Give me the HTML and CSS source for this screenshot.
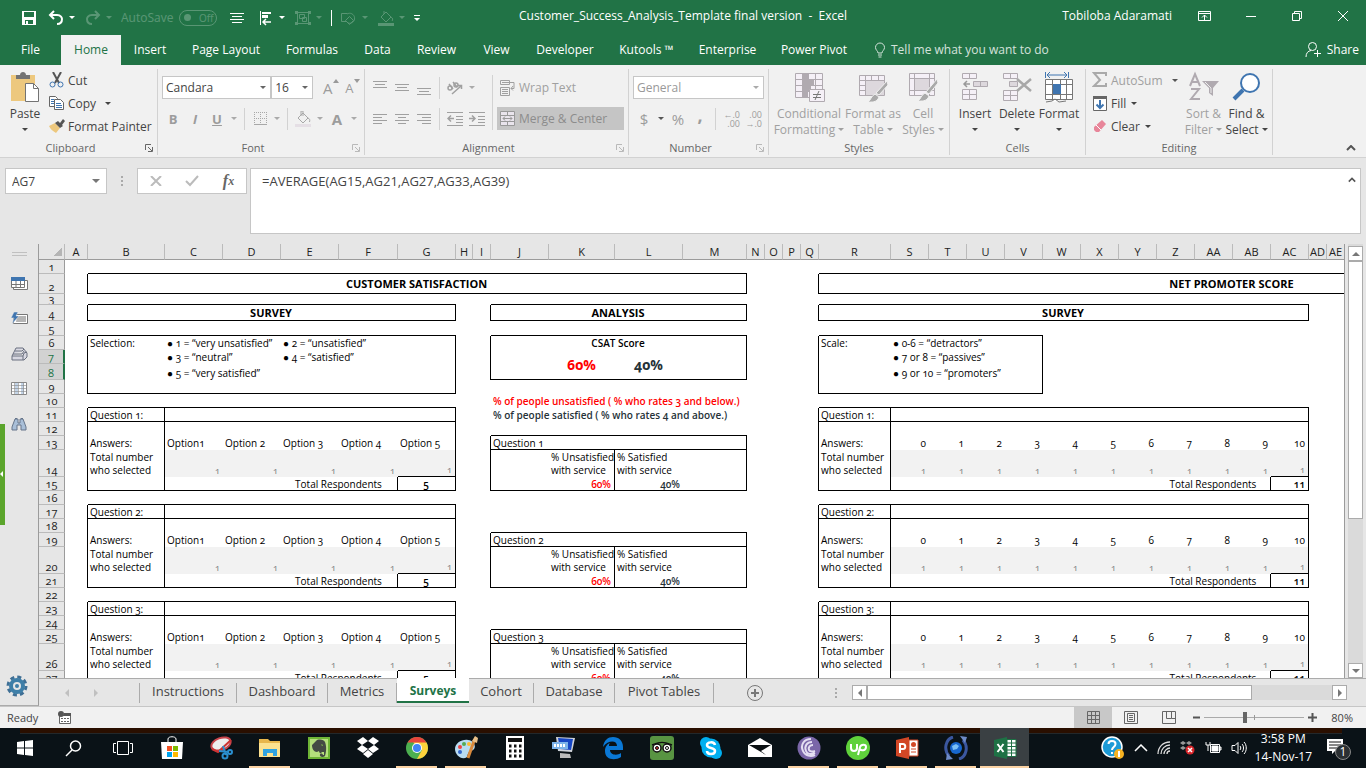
FILE: index.html
```html
<!DOCTYPE html>
<html lang="en">
<head>
    <meta charset="UTF-8">
    <meta name="viewport" content="width=device-width, initial-scale=1.0">
    <title>Customer_Success_Analysis_Template final version - Excel</title>
    <link rel="stylesheet" href="styles.css">
</head>
<body>
    <header class="titlebar">
        <div class="qat">
            <button class="qat-btn" aria-label="Save"><svg width="16" height="16" viewBox="0 0 16 16"><path d="M1 1h14v14H1z" fill="#fff"/><path d="M3 2h10v5H3zM4 10h8v4H4z" fill="#217346"/><path d="M5 11h2v4H5z" fill="#fff"/></svg></button>
            <div class="split"><button aria-label="Undo"><svg width="18" height="16" viewBox="0 0 18 16" fill="none" stroke="#fff" stroke-width="2"><path d="M7 1L3 5l4 4M3 5h7c4 0 5 3 5 4 0 3-2 5-5 5"/></svg></button><i class="caret"></i></div>
            <div class="split dim"><button aria-label="Redo"><svg width="18" height="16" viewBox="0 0 18 16" fill="none" stroke="#fff" stroke-width="2"><path d="M11 1l4 4-4 4M15 5H8C4 5 3 8 3 9c0 3 2 5 5 5"/></svg></button><i class="caret"></i></div>
            <label class="autosave dim">AutoSave <span class="toggle"><input type="checkbox" disabled>Off</span></label>
            <button class="qat-btn wide" aria-label="Center"><svg width="14" height="14" viewBox="0 0 14 14" stroke="#fff"><path d="M0 2.500h14M2 5.500h10M0 8.500h14M2 11.500h10"/></svg></button>
            <div class="split"><button aria-label="Align"><svg width="18" height="16" viewBox="0 0 18 16"><path d="M3.500 1v14" stroke="#fff"/><path d="M5 2h9v2H5zM5 5h6v3H5z" fill="#fff"/><path d="M14 12H6m3-3l-3 3 3 3" fill="none" stroke="#fff" stroke-width="1.500"/></svg></button><i class="caret"></i></div>
            <div class="split dim"><button aria-label="Group"><svg width="18" height="16" viewBox="0 0 18 16" fill="none" stroke="#fff"><path d="M3.500 2.500h11v11h-11zM5.500 4.500h5v4h-5zM8.500 7.500h4v4h-4z"/><path d="M1 1h3v3H1zM14 1h3v3h-3zM1 12h3v3H1zM14 12h3v3h-3z" fill="#fff" stroke="none"/></svg></button><i class="caret"></i></div>
            <span class="qat-sep"></span>
            <div class="split dim"><button aria-label="Shapes"><svg width="18" height="16" viewBox="0 0 18 16" fill="none" stroke="#fff"><path d="M6 11.500H1.500v-8H7M8 13a5 5 0 1 0-1-9M9.500 6.500l4 4-4 4-4-4z"/></svg></button><i class="caret"></i></div>
            <div class="split dim"><button aria-label="Shape fill"><svg width="18" height="16" viewBox="0 0 18 16" fill="none" stroke="#fff"><path d="M4 7l5-5 5 5-5 5zM7 4V1M14 7c2 1 2 3 1 4"/><path d="M1 13h16v3H1z" fill="#fff" stroke="none"/></svg></button><i class="caret"></i></div>
            <button class="customise" aria-label="Customize toolbar"><i class="caret"></i></button>
        </div>
        <div class="doc-title">Customer_Success_Analysis_Template final version &nbsp;-&nbsp; Excel</div>
        <div class="window-tools">
            <span class="user">Tobiloba Adaramati</span>
            <button aria-label="Ribbon options"><svg width="14" height="12" viewBox="0 0 14 12" fill="none" stroke="#fff"><path d="M.5 1.500h12v9H.5zM.5 3.500h12M6.500 10V5M4 7.500L6.500 5 9 7.500"/></svg></button>
            <button aria-label="Minimize"><svg width="12" height="12" viewBox="0 0 12 12" stroke="#fff"><path d="M1 6.500h10"/></svg></button>
            <button aria-label="Restore"><svg width="12" height="12" viewBox="0 0 12 12" fill="none" stroke="#fff"><path d="M1.500 3.500h7v7h-7zM3.500 3V1.500h7v7H9"/></svg></button>
            <button aria-label="Close"><svg width="12" height="12" viewBox="0 0 12 12" stroke="#fff"><path d="M1 1l10 10M11 1L1 11"/></svg></button>
        </div>
    </header>

    <nav class="tabs">
        <a href="#">File</a>
        <a href="#" class="active">Home</a>
        <a href="#">Insert</a>
        <a href="#">Page Layout</a>
        <a href="#">Formulas</a>
        <a href="#">Data</a>
        <a href="#">Review</a>
        <a href="#">View</a>
        <a href="#">Developer</a>
        <a href="#">Kutools ™</a>
        <a href="#">Enterprise</a>
        <a href="#">Power Pivot</a>
        <a href="#" class="tell-me"><svg width="12" height="16" viewBox="0 0 12 16" fill="none" stroke="#fff"><path d="M4 11c0-2-2.500-3-2.500-5.500a4.500 4.500 0 0 1 9 0C10.500 8 8 9 8 11zM4 13h4M4.500 15h3"/></svg>Tell me what you want to do</a>
        <a href="#" class="share"><svg width="16" height="17" viewBox="0 0 16 17" fill="none" stroke="#fff"><circle cx="7.500" cy="5.500" r="4"/><path d="M1 16c0-4 2-6 5-6.500M12.500 9v7M9 12.500h7"/></svg>Share</a>
    </nav>

    <section class="ribbon">
        <div class="group clipboard">
            <div class="group-body">
                <button class="big"><svg width="30" height="32" viewBox="0 0 30 32"><path d="M1 4h24v26H1z" fill="#edc87e"/><path d="M6 4h4c0-4 6-4 6 0h4v4H6z" fill="#737373"/><path d="M15.500 12.500h8l5 5v13h-13z" fill="#fff" stroke="#737373"/><path d="M23.500 12.500v5h5" fill="none" stroke="#737373"/></svg>Paste<i class="caret"></i></button>
                <div class="stack">
                    <button class="small"><svg width="16" height="16" viewBox="0 0 16 16" fill="none"><path d="M4 0l6 11M12 0L6 11" stroke="#555" stroke-width="2"/><circle cx="3.500" cy="12.500" r="2.500" stroke="#3f75b0"/><circle cx="11.500" cy="12.500" r="2.500" stroke="#3f75b0"/></svg>Cut</button>
                    <button class="small"><svg width="16" height="16" viewBox="0 0 16 16" fill="#fff" stroke="#666"><path d="M.5 1.500h6l2 2v8h-8z"/><path d="M5.500 4.500h6l3 3v7h-9z"/><path d="M2 4.500h3M2 6.500h3M2 8.500h3M7 8.500h5M7 10.500h6M7 12.500h6" stroke="#3f75b0"/></svg>Copy<i class="caret far"></i></button>
                    <button class="small"><svg width="16" height="16" viewBox="0 0 16 16"><path d="M0 8l6-3 5 5-4 5C4 13 1 11 0 8z" fill="#edc87e"/><path d="M6 5l3-2 2 2 3-4 2 2-3 4 1 1-3 2z" fill="#555"/></svg>Format Painter</button>
                </div>
            </div>
            <div class="group-label"><span>Clipboard</span><svg width="8" height="8" viewBox="0 0 8 8"><use href="#launcher"/></svg></div>
        </div>

        <div class="group font">
            <div class="group-body rows">
                <div class="row">
                    <span class="combo font-name"><select aria-label="Font"><option>Candara</option></select></span>
                    <span class="combo font-size"><select aria-label="Font size"><option>16</option></select></span>
                    <button class="tool gap-left">A<svg class="sup" width="6" height="4" viewBox="0 0 6 4"><path d="M0 4l3-4 3 4z" fill="#999"/></svg></button>
                    <button class="tool smaller">A<svg class="sup" width="6" height="4" viewBox="0 0 6 4"><path d="M0 0h6L3 4z" fill="#999"/></svg></button>
                </div>
                <div class="row">
                    <button class="tool"><b>B</b></button><button class="tool"><b><em>I</em></b></button><button class="tool"><b><u>U</u></b></button><i class="caret"></i>
                    <span class="sep"></span>
                    <button class="tool" aria-label="Borders"><svg width="13" height="13" viewBox="0 0 13 13" stroke="#a8a8a8"><path d="M0 .5h13M0 6.500h13M.5 0v12M6.500 0v12M12.500 0v12" stroke-dasharray="1 1"/><path d="M0 12.500h13"/></svg></button><i class="caret"></i>
                    <span class="sep"></span>
                    <button class="tool" aria-label="Fill color"><svg width="16" height="16" viewBox="0 0 16 16" fill="none" stroke="#a8a8a8"><path d="M3 7l5-5 5 5-5 5zM6 5V0h2v5M13 7c2 1 2 2 1.500 4"/><path d="M0 13h16v3H0z" fill="#e5dfe5" stroke="none"/></svg></button><i class="caret"></i>
                    <button class="tool gray-a"><b>A</b></button><i class="caret"></i>
                </div>
            </div>
            <div class="group-label"><span>Font</span><svg class="faint" width="8" height="8" viewBox="0 0 8 8"><use href="#launcher"/></svg></div>
        </div>

        <div class="group alignment">
            <div class="group-body">
                <div class="rows align-tools">
                    <div class="row">
                        <button class="tool" aria-label="Top align"><svg width="14" height="16" viewBox="0 0 14 16" stroke="#a0a0a0"><path d="M0 1.500h14M2 4.500h10M0 7.500h14"/></svg></button>
                        <button class="tool" aria-label="Middle align"><svg width="14" height="16" viewBox="0 0 14 16" stroke="#a0a0a0"><path d="M0 4.500h14M2 7.500h10M0 10.500h14"/></svg></button>
                        <button class="tool" aria-label="Bottom align"><svg width="14" height="16" viewBox="0 0 14 16" stroke="#a0a0a0"><path d="M0 8.500h14M2 11.500h10M0 14.500h14"/></svg></button>
                        <span class="sep"></span>
                        <button class="tool" aria-label="Orientation"><svg width="18" height="16" viewBox="0 0 18 16" fill="none" stroke="#a0a0a0" stroke-width="1.500"><circle cx="4" cy="8" r="2"/><path d="M3 4l4 5M7 2l4 5"/><circle cx="10" cy="5" r="2"/><path d="M6 14l9-8M12 5.500h3.500V9"/></svg></button><i class="caret"></i>
                    </div>
                    <div class="row">
                        <button class="tool" aria-label="Align left"><svg width="14" height="12" viewBox="0 0 14 12" stroke="#a0a0a0"><path d="M0 1.500h14M0 4.500h9M0 7.500h14M0 10.500h9"/></svg></button>
                        <button class="tool" aria-label="Center"><svg width="14" height="12" viewBox="0 0 14 12" stroke="#a0a0a0"><path d="M0 1.500h14M3 4.500h8M0 7.500h14M3 10.500h8"/></svg></button>
                        <button class="tool" aria-label="Align right"><svg width="14" height="12" viewBox="0 0 14 12" stroke="#a0a0a0"><path d="M0 1.500h14M5 4.500h9M0 7.500h14M5 10.500h9"/></svg></button>
                        <span class="sep"></span>
                        <button class="tool" aria-label="Decrease indent"><svg width="16" height="14" viewBox="0 0 16 14" fill="none" stroke="#a0a0a0"><path d="M0 .5h16M9 4.500h7M9 7.500h7M9 10.500h7M0 13.500h16"/><path d="M7 6.500H1M4 3.500l-3 3 3 3" stroke-width="1.500"/></svg></button>
                        <button class="tool" aria-label="Increase indent"><svg width="16" height="14" viewBox="0 0 16 14" fill="none" stroke="#a0a0a0"><path d="M0 .5h16M9 4.500h7M9 7.500h7M9 10.500h7M0 13.500h16"/><path d="M0 6.500h6M3 3.500l3 3-3 3" stroke-width="1.500"/></svg></button>
                    </div>
                </div>
                <span class="sep tall"></span>
                <div class="rows wrap-tools">
                    <div class="row"><button class="text-tool"><svg width="16" height="16" viewBox="0 0 16 16" fill="none" stroke="#a0a0a0"><path d="M.5.5h9v4h-9zM.5 7.500h9v8h-9zM2 9.500h6M2 11.500h6M2 13.500h6M2 2.500h12v6h-3M13 6l-2 2.500 2 2"/></svg>Wrap Text</button></div>
                    <div class="row"><button class="text-tool pressed"><svg width="16" height="15" viewBox="0 0 16 15" fill="#e9e4ec" stroke="#999"><path d="M.5.5h14v14H.5zM.5 4.500h14M.5 10.500h14M7.500.5v4M7.500 10.500v4M3 7.500h9M5 5.500l-2 2 2 2M10 5.500l2 2-2 2"/></svg>Merge &amp; Center</button></div>
                </div>
            </div>
            <div class="group-label"><span>Alignment</span><svg class="faint" width="8" height="8" viewBox="0 0 8 8"><use href="#launcher"/></svg></div>
        </div>

        <div class="group number">
            <div class="group-body rows">
                <div class="row"><span class="combo number-format"><select aria-label="Number format" disabled><option>General</option></select></span></div>
                <div class="row">
                    <button class="tool large">$</button><i class="caret dark"></i>
                    <button class="tool large">%</button><button class="tool comma">,</button>
                    <span class="sep"></span>
                    <button class="tool decimals"><span>←.0</span><span>.00</span></button><button class="tool decimals"><span>.00</span><span>→.0</span></button>
                </div>
            </div>
            <div class="group-label"><span>Number</span><svg class="faint" width="8" height="8" viewBox="0 0 8 8"><use href="#launcher"/></svg></div>
        </div>

        <div class="group styles">
            <div class="group-body">
                <button class="big off"><svg width="32" height="32" viewBox="0 0 32 32" fill="#f5f0f7" stroke="#b0aab0"><path d="M2.500 2.500h27v24h-27zM2.500 8.500h27M2.500 14.500h27M2.500 20.500h27M9.500 2.500v24M22.500 2.500v24"/><path d="M10 3h6v5h-6zM10 9h11v5H10zM10 15h8v5h-8zM10 21h5v5h-5z" fill="#b0aab0" stroke="none"/><path d="M16.500 18.500h15v12h-15z"/><path d="M20 23.500h8M20 26.500h8M26 20l-4 9" stroke="#777"/></svg>Conditional<span>Formatting <i class="caret"></i></span></button>
                <button class="big off"><svg width="32" height="32" viewBox="0 0 32 32" fill="#f5f0f7" stroke="#b0aab0"><path d="M2.500 4.500h25v20h-25zM2.500 9.500h25M2.500 14.500h25M2.500 19.500h25M8.500 4.500v20M14.500 4.500v20M21.500 4.500v20"/><path d="M9 10h18v14H9z" fill="#ddd8dd" stroke="none"/><path d="M30 10l1 4-9 10-3-2zM18 23l4 3c-2 6-8 5-11 5 3-2 3-6 7-8z" fill="#aaa" stroke="#f1f1f1"/></svg>Format as<span>Table <i class="caret"></i></span></button>
                <button class="big off"><svg width="32" height="32" viewBox="0 0 32 32" fill="#f5f0f7" stroke="#b0aab0"><path d="M2.500 2.500h25v22h-25zM2.500 7.500h25M2.500 19.500h25M7.500 2.500v22M22.500 2.500v22"/><path d="M8 8h14v11H8z" fill="#ddd8dd" stroke="none"/><path d="M30 8l1 4-9 11-3-2zM18 22l4 3c-2 6-8 5-11 5 3-2 3-6 7-8z" fill="#aaa" stroke="#f1f1f1"/></svg>Cell<span>Styles <i class="caret"></i></span></button>
            </div>
            <div class="group-label"><span>Styles</span></div>
        </div>

        <div class="group cells">
            <div class="group-body">
                <button class="big"><svg width="30" height="32" viewBox="0 0 30 32" fill="#f5f0f7" stroke="#b0aab0"><path d="M2.500 2.500h14v5h-14zM9.500 2.500v5M2.500 18.500h14v10h-14zM9.500 18.500v10M2.500 23.500h14"/><path d="M13.500 10.500h14v5h-14zM20.500 10.500v5" fill="#ddd8dd"/><path d="M10 13H4m3-3l-3 3 3 3" fill="none" stroke="#999" stroke-width="1.500"/></svg>Insert<i class="caret"></i></button>
                <button class="big"><svg width="30" height="32" viewBox="0 0 30 32" fill="#f5f0f7" stroke="#b0aab0"><path d="M1.500 2.500h14v5h-14zM8.500 2.500v5M1.500 19.500h14v10h-14zM8.500 19.500v10M1.500 24.500h14"/><path d="M7.500 10.500h8v5h-8z" fill="#ddd8dd"/><path d="M15 8l14 12M29 8L15 20" stroke="#a8a8a8" stroke-width="2.500"/></svg>Delete<i class="caret"></i></button>
                <button class="big"><svg width="30" height="32" viewBox="0 0 30 32" fill="#fff" stroke="#777"><path d="M1.500 8.500h27v20h-27zM1.500 13.500h27M1.500 23.500h27M8.500 8.500v20M16.500 8.500v20M22.500 8.500v20M2 31l6-1 3-2 4 3 7-1"/><path d="M9 13h8v10H9z" fill="#3f75b0" stroke="none"/><path d="M1.500 1v6M24.500 1v6M3 4h20M6 1L3 4l3 3M20 1l3 3-3 3" fill="none" stroke="#3f75b0"/></svg>Format<i class="caret"></i></button>
            </div>
            <div class="group-label"><span>Cells</span></div>
        </div>

        <div class="group editing">
            <div class="group-body">
                <div class="stack">
                    <button class="small off"><svg width="16" height="16" viewBox="0 0 16 16" fill="none" stroke="#aaa" stroke-width="2"><path d="M14 4V1H2l6 7-6 6h12v-3"/></svg>AutoSum<i class="caret far dark"></i></button>
                    <button class="small"><svg width="16" height="16" viewBox="0 0 16 16"><path d="M1.500 1.500h13v14h-13z" fill="#fff" stroke="#666"/><path d="M1 1h14v3H1z" fill="#666"/><path d="M8 5v8M4.500 9.500L8 13l3.500-3.500" fill="none" stroke="#3f75b0" stroke-width="2"/></svg>Fill<i class="caret"></i></button>
                    <button class="small"><svg width="16" height="16" viewBox="0 0 16 16"><path d="M2 9l8-7 4 4-7 8H4l-2-2z" fill="#e8869a"/><path d="M4 7l5 5" stroke="#fff"/></svg>Clear<i class="caret"></i></button>
                </div>
                <button class="big off"><svg width="30" height="32" viewBox="0 0 30 32" fill="none" stroke="#b0aab0" stroke-width="2"><path d="M1 15L6 3l5 12M3 11h6M2 18h8L2 28h9"/><path d="M13 10h17l-6 7v8l-4-3v-5z" fill="#b0aab0" stroke="none"/><path d="M16 11l6 6v5" stroke="#eee" stroke-width="1"/></svg>Sort &amp;<span>Filter <i class="caret"></i></span></button>
                <button class="big"><svg width="30" height="32" viewBox="0 0 30 32" fill="none" stroke="#3f75b0"><circle cx="18" cy="12" r="9" fill="#fff" stroke-width="2"/><path d="M11 19l-9 9" stroke-width="4"/></svg>Find &amp;<span>Select <i class="caret"></i></span></button>
            </div>
            <div class="group-label"><span>Editing</span></div>
        </div>
        <button class="collapse" aria-label="Collapse ribbon"><svg width="10" height="6" viewBox="0 0 10 6" fill="none" stroke="#555" stroke-width="2"><path d="M1 5l4-4 4 4"/></svg></button>
    </section>

    <section class="formula-bar">
        <div class="name-box"><input type="text" value="AG7" aria-label="Name box"><i class="caret"></i></div>
        <span class="dots"></span>
        <div class="fx-buttons">
            <button aria-label="Cancel"><svg width="12" height="10" viewBox="0 0 12 10" stroke="#bbb" stroke-width="2"><path d="M1 0l10 10M11 0L1 10"/></svg></button>
            <button aria-label="Enter"><svg width="14" height="12" viewBox="0 0 14 12" fill="none" stroke="#bbb" stroke-width="2"><path d="M1 6l4 4 8-9"/></svg></button>
            <button class="fx" aria-label="Insert function">f<small>x</small></button>
        </div>
        <div class="formula"><textarea aria-label="Formula">=AVERAGE(AG15,AG21,AG27,AG33,AG39)</textarea><svg width="8" height="6" viewBox="0 0 10 6" fill="none" stroke="#555" stroke-width="2"><path d="M1 5l4-4 4 4"/></svg></div>
    </section>

    <main class="workspace">
        <aside class="side-panel">
            <span class="grip"></span>
            <button aria-label="Workbooks"><svg width="17" height="14" viewBox="0 0 17 14" fill="#fff" stroke="#777"><path d="M2.500 3.500h14v9h-14z"/><path d="M.5.5h13v10H.5zM.5 7.500h13M5 3v7M9.500 3v7"/><path d="M0 0h14v4H0z" fill="#3f75b0" stroke="none"/></svg></button>
            <button aria-label="AutoText"><svg width="17" height="14" viewBox="0 0 17 14"><path d="M2.500 2.500h14v9h-14z" fill="#fff" stroke="#777"/><path d="M6 4h9v6H5z" fill="#b5b5b5"/><path d="M3 0h4L5 4h3L1 12l2-6H0z" fill="#3f75b0" stroke="#e6e6e6" stroke-width=".5"/></svg></button>
            <button aria-label="Names"><svg width="17" height="14" viewBox="0 0 17 14" fill="#d8d8e2" stroke="#6a7080"><path d="M5 1h7l4 5v4l-3 3H1V9zM1 9h11l1-3 3-1M2 7h9l2-3M4 4h7l2-2M12 9v4"/></svg></button>
            <button aria-label="Columns"><svg width="17" height="14" viewBox="0 0 17 14" fill="#fff" stroke="#888"><path d="M.5.5h15v12H.5z"/><path d="M4 1h3v11H4zM10 1h3v11h-3z" fill="#c4d5e8" stroke="none"/><path d="M1 3.500h15M1 6.500h15M1 9.500h15M3.500 1v11M7.500 1v11M12.500 1v11" stroke-width=".6"/></svg></button>
            <button aria-label="Find and replace"><svg width="16" height="14" viewBox="0 0 16 14" fill="#a9bfd8" stroke="#66758a"><path d="M4 2h3v4h2V2h3l3 8v3h-5V8H6v5H1v-3z"/><path d="M4 1.500h2M10 1.500h2"/></svg></button>
            <button class="gear" aria-label="Settings"><svg width="22" height="22" viewBox="0 0 22 22"><circle cx="11" cy="11" r="9" fill="none" stroke="#3f6f95" stroke-width="3" stroke-dasharray="4 3.070"/><circle cx="11" cy="11" r="6" fill="#e6e6e6" stroke="#3f7fa8" stroke-width="4"/><circle cx="11" cy="11" r="2" fill="#3f7fa8"/></svg></button>
            <span class="pull-tab"></span>
        </aside>
        <div class="workbook">
            <div class="sheet-area">
                <div class="sheet"><table id="grid"></table></div>
                <div class="vscroll">
                    <button aria-label="Scroll up"><i class="arrow up"></i></button>
                    <span class="thumb"></span>
                    <button aria-label="Scroll down"><i class="arrow down"></i></button>
                </div>
            </div>
            <div class="sheet-tabs">
                <div class="tab-nav"><i class="arrow left"></i><i class="arrow right"></i></div>
                <a href="#" class="w97">Instructions</a>
                <a href="#" class="w91">Dashboard</a>
                <a href="#" class="w69">Metrics</a>
                <a href="#" class="w72 active">Surveys</a>
                <a href="#" class="w65">Cohort</a>
                <a href="#" class="w81">Database</a>
                <a href="#" class="w99">Pivot Tables</a>
                <button class="add-sheet" aria-label="New sheet"><svg width="16" height="16" viewBox="0 0 16 16" fill="none" stroke="#777"><circle cx="8" cy="8" r="7.500"/><path d="M4 8h8M8 4v8" stroke-width="2"/></svg></button>
                <span class="dots"></span>
                <div class="hscroll">
                    <button aria-label="Scroll left"><i class="arrow left"></i></button>
                    <span class="thumb"></span>
                    <button aria-label="Scroll right"><i class="arrow right"></i></button>
                </div>
            </div>
        </div>
    </main>

    <footer class="statusbar">
        <span>Ready</span>
        <svg class="macro" width="14" height="14" viewBox="0 0 14 14"><path d="M1.500 4.500h11v8h-11z" fill="#fff" stroke="#666"/><path d="M6 2h7v3H6z" fill="#555"/><path d="M3 7.500h8M3 10.500h8" stroke="#666" stroke-dasharray="2 1"/><circle cx="3" cy="3" r="3" fill="#555"/></svg>
        <div class="views">
            <button class="on" aria-label="Normal"><svg width="13" height="13" viewBox="0 0 13 13" fill="none" stroke="#666"><path d="M.5.5h12v12H.5zM.5 4.500h12M.5 8.500h12M4.500.5v12M8.500.5v12"/></svg></button>
            <button aria-label="Page layout"><svg width="14" height="13" viewBox="0 0 14 13" fill="none" stroke="#666"><path d="M.5.5h13v12H.5zM3.500 2.500h7v8h-7zM5 4.500h4M5 6.500h4M5 8.500h4"/></svg></button>
            <button aria-label="Page break"><svg width="14" height="13" viewBox="0 0 14 13" fill="none" stroke="#666"><path d="M.5.5h13v12H.5zM4.500.5v7h5v-7M9.500 7.500h4"/></svg></button>
        </div>
        <div class="zoom">
            <button aria-label="Zoom out"><svg width="7" height="9" viewBox="0 0 7 9"><path d="M0 3.500h7v2H0z" fill="#555"/></svg></button>
            <input type="range" min="0" max="100" value="40" aria-label="Zoom">
            <button aria-label="Zoom in"><svg width="9" height="9" viewBox="0 0 9 9"><path d="M0 3.500h9v2H0zM3.500 0h2v9h-2z" fill="#555"/></svg></button>
            <span>80%</span>
        </div>
    </footer>

    <div class="taskbar">
        <button aria-label="Start"><svg width="16" height="16" viewBox="0 0 16 16" fill="#fff"><path d="M0 2l7-1v6.500H0zM8 1l8-1v7.500H8zM0 8.500h7V15l-7-1zM8 8.500h8V16l-8-1z"/></svg></button>
        <button aria-label="Search"><svg width="17" height="17" viewBox="0 0 17 17" fill="none" stroke="#fff" stroke-width="1.500"><circle cx="10.500" cy="6" r="5"/><path d="M7 10l-6 6"/></svg></button>
        <button aria-label="Task view"><svg width="20" height="16" viewBox="0 0 20 16" fill="none" stroke="#fff"><path d="M4.500 1.500h11v13h-11zM3 3.500H.5v9H3M17 3.500h2.500v9H17"/></svg></button>
        <button aria-label="Store"><svg width="24" height="24" viewBox="0 0 24 24"><path d="M8 7V3c0-3 8-3 8 0v4" fill="none" stroke="#fff"/><path d="M1 6h22l-1 17H2z" fill="#fff"/><path d="M7 10h5v5H7z" fill="#f25022"/><path d="M13 10h5v5h-5z" fill="#7fba00"/><path d="M7 16h5v5H7z" fill="#00a4ef"/><path d="M13 16h5v5h-5z" fill="#ffb900"/></svg></button>
        <button aria-label="Snipping tool"><svg width="24" height="24" viewBox="0 0 24 24" fill="none"><ellipse cx="12" cy="8" rx="10" ry="6" transform="rotate(-20 12 8)" fill="#eee" stroke="#c8444b" stroke-width="2"/><path d="M3 13l6 3 13-12" stroke="#c33" stroke-width="2"/><path d="M14 10l3 9M10 15l10 1" stroke="#2a8fd0" stroke-width="2"/><circle cx="16" cy="20" r="2.500" stroke="#2a8fd0" stroke-width="2"/><circle cx="21" cy="16" r="2" stroke="#2a8fd0" stroke-width="2"/></svg></button>
        <button class="open" aria-label="File Explorer"><svg width="24" height="24" viewBox="0 0 24 24"><path d="M1 3h9l2 2h10v16H1z" fill="#e8b64c"/><path d="M1 7h21v14H1z" fill="#fce18f"/><path d="M5 20v-7h14v7h-4v-3H9v3z" fill="#2fa2e0"/></svg></button>
        <button aria-label="Evernote"><svg width="24" height="24" viewBox="0 0 24 24"><path d="M1 1h22v22H1z" fill="#6fb536"/><path d="M3 3h18v18H3z" fill="#b5e07c"/><path d="M5 9l5-5c4-1 7 0 8 2 2 5 1 11 0 14-2 2-6 1-5-2 1-1 3 0 3 1h1v-3h-2c-1 2-3 1-3-1l-2 1c-3 0-5-3-5-7z" fill="#444b44"/><path d="M14 9c1-1 2 0 2 1z" fill="#8ecf51"/></svg></button>
        <button aria-label="Dropbox"><svg width="24" height="24" viewBox="0 0 24 24" fill="#fff"><path d="M7 1l5 4-6 4-5-4zM17 1l6 4-5 4-6-4zM6 9l6 4-5 4-6-4zM18 9l5 4-6 4-5-4zM7 18l5-4 5 4-5 4z"/></svg></button>
        <button class="open" aria-label="Chrome"><svg width="24" height="24" viewBox="0 0 24 24"><circle cx="12" cy="12" r="11" fill="#4caf50"/><path d="M12 12h-1L7 3 21.500 6.500A11 11 0 0 1 12 23l5-9z" fill="#fdd23c"/><path d="M2.500 6.500a11 11 0 0 1 19 0H12z" fill="#e8453c"/><circle cx="12" cy="12" r="5" fill="#fff"/><circle cx="12" cy="12" r="4" fill="#4285f4"/></svg></button>
        <button class="open" aria-label="Paint"><svg width="24" height="24" viewBox="0 0 24 24"><path d="M1 13C1 7 8 3 14 4c8 1 9 10 3 11-3 1-3 3-4 6-5 4-12-2-12-8z" fill="#b9dcf2"/><circle cx="6" cy="11" r="2" fill="#e44"/><circle cx="10" cy="8" r="2" fill="#5a5"/><circle cx="6" cy="16" r="2" fill="#36c"/><circle cx="15" cy="8" r="2" fill="#fb3"/><path d="M14 22l6-17" stroke="#d98a3d" stroke-width="3"/><path d="M18 5l3-5 3 2-1 5z" fill="#e9c08a"/></svg></button>
        <button aria-label="Calculator"><svg width="20" height="24" viewBox="0 0 20 24"><path d="M1 0h18v24H1z" fill="#fff"/><path d="M3 2h14v4H3z" fill="#111"/><path d="M4 10h13M4 15h13M4 20h13" stroke="#111" stroke-width="3" stroke-dasharray="2.500 2.500"/></svg></button>
        <button aria-label="Remote"><svg width="24" height="24" viewBox="0 0 24 24"><path d="M4 1l19 1-3 14-14-1z" fill="#cfd3da"/><path d="M6 2l15 1-2 11L8 13z" fill="#1746c4"/><path d="M0 6h16v7H0z" fill="#7db3ea"/><path d="M2 9.500h12" stroke="#fff" stroke-width="3" stroke-dasharray="2 1"/><path d="M8 17l10 1 1 4H8z" fill="#bbb"/></svg></button>
        <button aria-label="Edge"><svg width="24" height="24" viewBox="0 0 24 24"><path d="M2 11C3 4 7 1 12 1c6 0 10 4 10 10v3H9c0 5 7 6 11 3v4c-6 4-16 3-16-6 0-4 2-7 5-8-1 1-1 2-1 3h8c0-6-9-6-14 1z" fill="#0a78d6"/></svg></button>
        <button aria-label="TripAdvisor"><svg width="24" height="24" viewBox="0 0 24 24"><rect width="24" height="24" rx="3" fill="#589442"/><path d="M2 9l3-1c4-2 10-2 14 0l3 1" fill="none" stroke="#111" stroke-width="1.500"/><g fill="#fff" stroke="#111" stroke-width="1.500"><circle cx="7" cy="12" r="4"/><circle cx="17" cy="12" r="4"/></g><circle cx="7" cy="12" r="1.500" fill="#c33" stroke="#111"/><circle cx="17" cy="12" r="1.500" fill="#fff" stroke="#111"/></svg></button>
        <button aria-label="Skype"><svg width="24" height="24" viewBox="0 0 24 24"><circle cx="12" cy="12" r="9.500" fill="#00aff0"/><circle cx="7" cy="7" r="6" fill="#00aff0"/><circle cx="17" cy="17" r="6" fill="#00aff0"/><path d="M16 9c-1-4-8-3-8 0 0 4 8 2 8 6 0 4-8 4-8 0" fill="none" stroke="#fff" stroke-width="2.500"/></svg></button>
        <button aria-label="Mail"><svg width="24" height="20" viewBox="0 0 24 20"><path d="M0 7l12-7 12 7v12H0z" fill="#fff"/><path d="M1 7h22l-10 6 5 4z" fill="#0a0f12"/></svg></button>
        <button class="open" aria-label="BitTorrent"><svg width="24" height="24" viewBox="0 0 24 24" fill="none"><circle cx="12" cy="12" r="11.500" fill="#7a66a8"/><path d="M14 3c-7 0-11 6-8 12 2 5 8 6 12 4M15 6c-5 0-8 4-6 9 1 3 5 4 9 2M16 9c-3 0-5 2-4 5 1 2 3 2 6 1" stroke="#e4def2" stroke-width="2"/></svg></button>
        <button class="open" aria-label="Upwork"><svg width="24" height="24" viewBox="0 0 24 24" fill="none"><circle cx="12" cy="12" r="12" fill="#5fd13b"/><path d="M5 8v4c0 4 6 4 6 0V8M12 19l2-8c1-3 6-3 6 0 0 4-5 4-6 2" stroke="#fff" stroke-width="2"/></svg></button>
        <button class="open" aria-label="PowerPoint"><svg width="24" height="24" viewBox="0 0 24 24"><path d="M1 4l13-3v22L1 20z" fill="#d24726"/><path d="M14 4h9v16h-9z" fill="#fff" stroke="#d24726"/><path d="M16 13h5M16 16h5" stroke="#d24726"/><circle cx="18.500" cy="8.500" r="2.500" fill="#d24726"/><path d="M5 17V8h3c3 0 3 5 0 5H5" fill="none" stroke="#fff" stroke-width="2"/></svg></button>
        <button class="open" aria-label="Sync"><svg width="24" height="24" viewBox="0 0 24 24" fill="none"><path d="M9 1C2 3-1 13 5 20M15 23c7-2 10-12 4-19" stroke="#3b57a0" stroke-width="3"/><path d="M3 17l6 6-7 1zM21 7l-5-7 7 1z" fill="#6e8bc8"/><circle cx="12" cy="12" r="6" fill="#1767cf"/><path d="M8 10l4-2 3 2-2 3-4 1z" fill="#7cc0f5"/></svg></button>
        <button class="open current" aria-label="Excel"><svg width="24" height="24" viewBox="0 0 24 24"><path d="M1 4l13-3v22L1 20z" fill="#1e7145"/><path d="M14 3.500h9v17h-9z" fill="#fff" stroke="#1e7145"/><path d="M14 7h9M14 10.500h9M14 14h9M14 17h9M18.500 4v16" stroke="#1e7145"/><path d="M4.500 8l6 8M10.500 8l-6 8" stroke="#fff" stroke-width="2"/></svg></button>

        <div class="tray">
            <svg width="24" height="24" viewBox="0 0 24 24"><circle cx="11" cy="11" r="10" fill="#1c9ad6" stroke="#fff" stroke-width="1.500"/><path d="M7.500 8c0-4 7-4 7 0 0 3-3.500 3-3.500 6M11 16v2" fill="none" stroke="#fff" stroke-width="2"/><circle cx="18" cy="18" r="5" fill="#f6b221"/><path d="M18 15v6" stroke="#fff" stroke-width="2"/></svg>
            <svg width="14" height="8" viewBox="0 0 14 8" fill="none" stroke="#fff" stroke-width="1.500"><path d="M1 7l6-6 6 6"/></svg>
            <svg width="14" height="14" viewBox="0 0 14 14" fill="none" stroke="#ddd" stroke-width="1.300"><path d="M1 13C1 6 6 1 13 1M4 13c0-5 4-9 9-9M7 13c0-3 3-6 6-6M10 13c0-2 1-3 3-3"/></svg>
            <svg width="16" height="14" viewBox="0 0 16 14"><path d="M3 0l3 2-3 2-3-2zM9 0l3 2-3 2-3-2zM3 5l3 2-3 2-3-2zM9 5l3 2-3 2-3-2z" fill="#999"/><circle cx="10" cy="9" r="4.500" fill="#d9252a"/><path d="M8 7l4 4M12 7l-4 4" stroke="#fff" stroke-width="1.500"/></svg>
            <svg width="17" height="12" viewBox="0 0 17 12" fill="none" stroke="#fff"><path d="M5.500 2.500h9v8h-9zM15 5v3h1V5zM1 0v3h4V0M3 3v6"/><path d="M7 4h6v5H7z" fill="#fff"/></svg>
            <svg width="17" height="14" viewBox="0 0 17 14" fill="none" stroke="#fff"><path d="M1 4.500h3l3-3v11l-3-3H1zM9 5c1 1 1 3 0 4M11 3c2 2 2 6 0 8M13 1c3 3 3 9 0 12"/></svg>
            <div class="clock"><span>3:58 PM</span><span>14-Nov-17</span></div>
            <div class="notices"><svg width="16" height="16" viewBox="0 0 16 16"><path d="M0 1h16v12H8l-3 3v-3H0z" fill="#fff"/><path d="M2 4h12M2 7h12M2 10h8" stroke="#111"/></svg><span class="badge">1</span></div>
        </div>
    </div>

    <svg width="0" height="0" class="defs"><symbol id="launcher" viewBox="0 0 8 8"><path d="M.5 6V.5H6M3 3l4 4M7.500 3v4.500H3" fill="none" stroke="#666"/></symbol></svg>
    <script src="sheet.js"></script>
</body>
</html>
```
FILE: sheet.js
```js
// column name -> width
const cols = [
    ['A', 23], ['B', 77], ['C', 58], ['D', 58], ['E', 58], ['F', 59], ['G', 58], ['H', 17], ['I', 18],
    ['J', 58], ['K', 66], ['L', 68], ['M', 64], ['N', 18], ['O', 18], ['P', 18], ['Q', 18], ['R', 72],
    ['S', 38], ['T', 38], ['U', 38], ['V', 38], ['W', 38], ['X', 38], ['Y', 38], ['Z', 38],
    ['AA', 38], ['AB', 38], ['AC', 38], ['AD', 18], ['AE', 18],
    ['AF', 58], ['AG', 66], ['AH', 68], ['AI', 64], ['AJ', 45]
];
const rows = [14, 20, 11, 16, 15, 14, 14, 16, 14, 14, 14, 14, 14, 27, 14, 14, 14, 14, 14, 27, 14, 14, 14, 14, 14, 27, 14];
const selectedRows = [7, 8];

const names = cols.map(c => c[0]);
const cells = rows.map(() => cols.map(() => ({ text: '', cls: [], cover: null, span: null })));

function parse(range) {
    const parts = range.split(':').map(p => {
        const m = p.match(/([A-Z]+)(\d+)/);
        return [Number(m[2]) - 1, names.indexOf(m[1])];
    });
    const [a, b] = [parts[0], parts[1] || parts[0]];
    return { r1: a[0], c1: a[1], r2: b[0], c2: b[1] };
}

// write text in a cell, or merge a range and write in it
function put(range, text, ...cls) {
    const { r1, c1, r2, c2 } = parse(range);
    const cell = cells[r1][c1];
    cell.text = text;
    cell.cls.push(...cls);
    if (r1 !== r2 || c1 !== c2) {
        cell.span = [r2 - r1 + 1, c2 - c1 + 1];
        for (let r = r1; r <= r2; r++)
            for (let c = c1; c <= c2; c++)
                if (r !== r1 || c !== c1) cells[r][c].cover = cell;
    }
}

function line(r, c, cls) {
    const cell = cells[r] && cells[r][c];
    if (cell) (cell.cover || cell).cls.push(cls);
}

// outline a range, call it after the merges are made
function box(range) {
    const { r1, c1, r2, c2 } = parse(range);
    for (let c = c1; c <= c2; c++) {
        line(r1 - 1, c, 'line-b');
        line(r2, c, 'line-b');
    }
    for (let r = r1; r <= r2; r++) {
        line(r, c1 - 1, 'line-r');
        line(r, c2, 'line-r');
    }
}

// one question block, first column / last column / answers
function question(n, row, first, from, to, answers, align) {
    put(first + row, 'Question ' + n + ':');
    put(first + (row + 2), 'Answers:');
    put(first + (row + 3), 'Total number\nwho selected', 'wrap');
    const start = names.indexOf(from);
    answers.forEach((a, i) => {
        put(names[start + i] + (row + 2), a, align);
        put(names[start + i] + (row + 3), '1', 'shade');
    });
    box(first + row + ':' + first + row);
    box(from + row + ':' + to + row);
    box(first + (row + 1) + ':' + first + (row + 4));
    box(from + (row + 1) + ':' + to + (row + 4));
    box(to + (row + 4));
}

function analysis(n, row) {
    put('J' + row, 'Question ' + n);
    put('K' + (row + 1), '% Unsatisfied\nwith service', 'wrap');
    put('L' + (row + 1), '% Satisfied\nwith service', 'wrap');
    put('K' + (row + 2), '60%', 'right', 'red', 'bold');
    put('L' + (row + 2), '40%', 'right', 'slate', 'bold');
    box('J' + row + ':M' + row);
    box('J' + (row + 1) + ':K' + (row + 2));
    box('L' + (row + 1) + ':M' + (row + 2));
}

put('B2:M2', 'CUSTOMER SATISFACTION', 'heading');
put('R2:AJ2', 'NET PROMOTER SCORE', 'heading');
put('B4:G4', 'SURVEY', 'heading');
put('J4:M4', 'ANALYSIS', 'heading');
put('R4:AC4', 'SURVEY', 'heading');

put('B6', 'Selection:');
put('C6', '● 1 = “very unsatisfied”');
put('C7', '● 3 = “neutral”');
put('C8', '● 5 = “very satisfied”');
put('E6', '● 2 = “unsatisfied”');
put('E7', '● 4 = “satisfied”');
put('J6:M6', 'CSAT Score', 'bold', 'center');
put('K7:K8', '60%', 'score', 'red');
put('L7:L8', '40%', 'score', 'slate');
put('J10', '% of people unsatisfied ( % who rates 3 and below.)', 'bold', 'red');
put('J11', '% of people satisfied ( % who rates 4 and above.)', 'bold', 'slate');
put('R6', 'Scale:');
put('S6', '● 0-6 = “detractors”');
put('S7', '● 7 or 8 = “passives”');
put('S8', '● 9 or 10 = “promoters”');
['B2:M2', 'R2:AJ2', 'B4:G4', 'J4:M4', 'R4:AC4', 'B6:G9', 'J6:M8', 'R6:V9'].forEach(box);

const options = ['Option1', 'Option 2', 'Option 3', 'Option 4', 'Option 5'];
const scores = ['0', '1', '2', '3', '4', '5', '6', '7', '8', '9', '10'];
[11, 17, 23].forEach((row, i) => {
    put('E' + (row + 4) + ':F' + (row + 4), 'Total Respondents', 'center');
    put('G' + (row + 4), '5', 'center', 'bold');
    question(i + 1, row, 'B', 'C', 'G', options, 'left');
    put('Z' + (row + 4) + ':AB' + (row + 4), 'Total Respondents', 'center');
    put('AC' + (row + 4), '11', 'right', 'bold');
    question(i + 1, row, 'R', 'S', 'AC', scores, 'right');
    analysis(i + 1, row + 2);
});

function render() {
    const table = document.getElementById('grid');
    const group = document.createElement('colgroup');
    [26, ...cols.map(c => c[1])].forEach(w => {
        const col = document.createElement('col');
        col.style.width = w + 'px';
        group.appendChild(col);
    });
    table.appendChild(group);

    const head = table.createTHead().insertRow();
    ['', ...names].forEach(name => {
        const th = document.createElement('th');
        th.textContent = name;
        if (!name) th.className = 'corner';
        head.appendChild(th);
    });

    const body = table.createTBody();
    rows.forEach((height, r) => {
        const tr = body.insertRow();
        tr.style.height = height + 'px';
        const th = document.createElement('th');
        th.textContent = r + 1;
        if (selectedRows.includes(r + 1)) th.className = 'selected';
        tr.appendChild(th);
        cells[r].forEach(cell => {
            if (cell.cover) return;
            const td = tr.insertCell();
            td.textContent = cell.text;
            td.className = [...new Set(cell.cls)].join(' ');
            if (cell.span) {
                td.rowSpan = cell.span[0];
                td.colSpan = cell.span[1];
            }
        });
    });
}

render();
```
FILE: styles.css
```css
* {
    box-sizing: border-box;
}
body {
    margin: 0;
    height: 100vh;
    display: flex;
    flex-direction: column;
    overflow: hidden;
    font-family: "Open Sans", "Noto Sans", sans-serif;
    font-size: 12px;
    color: #444;
    background: #e6e6e6;
}
button {
    display: flex;
    align-items: center;
    justify-content: center;
    padding: 0;
    border: none;
    background: none;
    font: inherit;
    color: inherit;
}
a {
    color: inherit;
    text-decoration: none;
}
svg {
    flex: none;
}
.defs {
    position: absolute;
}
.dim {
    opacity: 0.25;
}
.faint {
    opacity: 0.4;
}
.caret {
    display: inline-block;
    flex: none;
    border: 3px solid transparent;
    border-top-color: currentColor;
    border-bottom: none;
}

/* title bar */
.titlebar {
    height: 35px;
    flex: none;
    display: grid;
    grid-template-columns: 1fr auto 1fr;
    align-items: center;
    background: #217346;
    color: #fff;
}
.qat {
    display: flex;
    align-items: center;
    gap: 8px;
    padding-left: 19px;
}
.qat-btn {
    width: 20px;
}
.qat-btn.wide {
    width: 24px;
}
.split {
    display: flex;
    align-items: center;
    gap: 4px;
    width: 29px;
}
.autosave {
    display: flex;
    align-items: center;
    justify-content: space-between;
    width: 96px;
    white-space: nowrap;
}
.toggle {
    display: flex;
    align-items: center;
    gap: 8px;
    width: 38px;
    height: 16px;
    border: 1px solid #fff;
    border-radius: 8px;
    padding-left: 4px;
    font-size: 10px;
}
.toggle input {
    appearance: none;
    width: 7px;
    height: 7px;
    margin: 0;
    border-radius: 50%;
    background: #fff;
}
.qat-sep {
    width: 1px;
    height: 16px;
    background: #fff;
}
.customise {
    border-top: 1px solid #fff;
    padding-top: 2px;
}
.doc-title {
    padding-bottom: 4px;
}
.window-tools {
    display: flex;
    justify-content: flex-end;
    padding-bottom: 4px;
}
.window-tools button {
    width: 46px;
}
.user {
    padding-right: 10px;
}

/* ribbon tabs */
.tabs {
    height: 30px;
    flex: none;
    display: grid;
    grid-template-columns: 61px 60px 58px 94px 78px 53px 65px 55px 82px 81px 81px 92px 1fr auto;
    background: #217346;
    color: #fff;
}
.tabs a {
    display: flex;
    align-items: center;
    justify-content: center;
    padding-bottom: 1px;
    white-space: nowrap;
}
.tabs .active {
    background: #f1f1f1;
    color: #217346;
}
.tabs .tell-me {
    justify-content: flex-start;
    gap: 5px;
    padding-left: 14px;
    opacity: 0.8;
}
.tabs .share {
    gap: 6px;
    padding-right: 7px;
}

/* ribbon */
.ribbon {
    height: 93px;
    flex: none;
    display: flex;
    background: #f1f1f1;
    border-bottom: 1px solid #d2d2d2;
    padding: 4px 0 2px;
    white-space: nowrap;
}
.group {
    flex: none;
    display: flex;
    flex-direction: column;
    border-right: 1px solid #d2d2d2;
}
.clipboard { width: 158px; }
.font { width: 207px; }
.alignment { width: 264px; }
.number { width: 140px; }
.styles { width: 181px; }
.cells { width: 136px; }
.editing { width: 187px; }
.group-body {
    flex: 1;
    display: flex;
    padding: 0 4px;
}
.rows {
    display: flex;
    flex-direction: column;
    padding-top: 3px;
}
.group-body.rows {
    padding: 3px 4px 0;
}
.group-label {
    height: 14px;
    display: flex;
    align-items: center;
    padding: 0 4px;
    font-size: 11px;
    line-height: 14px;
    color: #666;
}
.group-label span {
    flex: 1;
    text-align: center;
}
.group-label svg {
    margin-left: 8px;
}
.big {
    flex-direction: column;
    justify-content: flex-start;
    padding-top: 2px;
    line-height: 16px;
}
.big svg {
    margin-bottom: 3px;
}
.big > .caret {
    margin-top: 6px;
}
.big span .caret {
    vertical-align: 3px;
}
.off {
    color: #a0a0a0;
}
.clipboard .big { width: 42px; }
.styles .big:nth-child(1) { width: 72px; }
.styles .big:nth-child(2) { width: 56px; }
.styles .big:nth-child(3) { width: 44px; }
.cells .big { width: 42px; }
.editing .big { width: 43px; }
.stack {
    display: flex;
    flex-direction: column;
}
.editing .stack {
    width: 92px;
    padding-left: 2px;
}
.clipboard .stack {
    padding-left: 3px;
}
.small {
    height: 23px;
    gap: 3px;
    justify-content: flex-start;
    padding-bottom: 1px;
}
.small .caret {
    margin-left: 2px;
}
.small .caret.far {
    margin-left: 6px;
}
.row {
    display: flex;
    align-items: center;
    height: 31px;
}
.row .caret {
    margin: 0 3px;
    color: #aaa;
}
.caret.dark,
.row .caret.dark {
    color: #555;
}
.tool {
    position: relative;
    width: 22px;
    height: 22px;
    color: #9c9c9c;
    font-size: 13px;
}
.tool.gap-left {
    margin-left: 4px;
    font-size: 15px;
}
.tool.large,
.tool.gray-a {
    font-size: 15px;
}
.tool.comma {
    padding-bottom: 8px;
    font-size: 18px;
    font-weight: bold;
}
.tool.decimals {
    flex-direction: column;
    align-items: flex-end;
    padding-right: 2px;
    font-size: 9px;
    line-height: 9px;
}
.decimals span {
    height: 9px;
}
.sup {
    position: absolute;
    top: 2px;
    right: 0;
}
.sep {
    width: 1px;
    height: 22px;
    margin: 0 4px;
    background: #d2d2d2;
}
.sep.tall {
    height: 55px;
    margin-top: 6px;
}
.align-tools {
    width: 119px;
}
.text-tool {
    height: 23px;
    gap: 3px;
    padding-left: 3px;
    justify-content: flex-start;
    color: #a0a0a0;
}
.text-tool.pressed {
    width: 127px;
    background: #c5c5c5;
    color: #8c8c8c;
}
.combo {
    position: relative;
    height: 23px;
}
.combo::after {
    content: "";
    position: absolute;
    right: 5px;
    top: 10px;
    border: 3px solid transparent;
    border-top-color: #666;
    border-bottom: none;
}
.combo select {
    appearance: none;
    width: 100%;
    height: 100%;
    padding: 0 3px;
    border: 1px solid #c6c6c6;
    border-radius: 0;
    background: #fff;
    font: inherit;
    color: #444;
}
.combo select:disabled {
    color: #999;
    opacity: 1;
}
.font-name { width: 112px; }
.font-size { width: 43px; }
.number-format { width: 131px; }
.number-format::after {
    border-top-color: #aaa;
}
.collapse {
    margin-left: auto;
    align-self: flex-end;
    width: 30px;
    height: 14px;
}

/* formula bar */
.formula-bar {
    flex: none;
    display: flex;
    align-items: flex-start;
    padding: 10px 5px;
}
.name-box,
.fx-buttons,
.formula {
    display: flex;
    align-items: center;
    height: 26px;
    border: 1px solid #c6c6c6;
    background: #fff;
}
.name-box {
    width: 102px;
    padding-right: 6px;
}
.name-box .caret {
    border-width: 4px;
    border-bottom: none;
    color: #777;
}
.name-box input {
    flex: 1;
    min-width: 0;
    padding: 0 6px;
    border: none;
    outline: none;
    font: inherit;
    color: #444;
}
.dots {
    width: 2px;
    height: 10px;
    margin: 8px 14px;
    background: repeating-linear-gradient(#aaa 0 2px, transparent 2px 4px);
}
.fx-buttons {
    width: 110px;
    justify-content: space-around;
    margin-right: 3px;
}
.fx {
    font: italic bold 16px "Liberation Serif", serif;
    color: #666;
}
.fx small {
    font-size: 12px;
}
.formula {
    flex: 1;
    height: 66px;
    align-items: flex-start;
    padding: 4px 4px 0 11px;
}
.formula textarea {
    flex: 1;
    height: 56px;
    padding: 0;
    border: none;
    outline: none;
    resize: none;
    font: inherit;
    font-size: 13px;
    line-height: 17px;
    color: #444;
}
.formula svg {
    margin-top: 4px;
}

/* side panel */
.workspace {
    flex: 1;
    min-height: 0;
    display: flex;
}
.side-panel {
    position: relative;
    width: 39px;
    flex: none;
    display: flex;
    flex-direction: column;
    align-items: center;
    gap: 21px;
    border-right: 1px solid #9b9b9b;
    border-bottom: 1px solid #ababab;
}
.side-panel button {
    height: 14px;
}
.grip {
    width: 15px;
    height: 4px;
    margin-top: 8px;
    border: 1px solid #c0c0c0;
    border-width: 1px 0;
}
.side-panel .gear {
    height: 22px;
    margin: auto auto 8px 6px;
}
.pull-tab {
    position: absolute;
    left: 0;
    top: 180px;
    width: 5px;
    height: 101px;
    background: #5ba52c;
}
.pull-tab::after {
    content: "";
    position: absolute;
    top: 47px;
    border: 3px solid transparent;
    border-right-color: #fff;
    border-left: none;
}

/* sheet */
.workbook {
    flex: 1;
    min-width: 0;
    display: flex;
    flex-direction: column;
}
.sheet-area {
    flex: 1;
    min-height: 0;
    display: flex;
}
.sheet {
    flex: 1;
    min-width: 0;
    overflow: hidden;
    border-right: 1px solid #9b9b9b;
    background: linear-gradient(#e6e6e6 16px, #fff 16px);
}
#grid {
    width: 0;
    table-layout: fixed;
    border-spacing: 0;
    font-family: "Open Sans", sans-serif;
    font-size: 10px;
    line-height: 13px;
    color: #000;
    font-variant-numeric: oldstyle-nums;
}
#grid th {
    padding: 0;
    background: #e6e6e6;
    font-weight: normal;
    font-size: 11px;
    color: #222;
    overflow: hidden;
}
#grid thead th {
    height: 16px;
    line-height: 15px;
    border-right: 1px solid #bbb;
    border-bottom: 1px solid #9b9b9b;
}
#grid .corner {
    background: linear-gradient(135deg, #e6e6e6 50%, #b5b5b5 50%) 15px 4px / 8px 8px no-repeat #e6e6e6;
}
#grid tbody th {
    line-height: 12px;
    border-right: 1px solid #9b9b9b;
    border-bottom: 1px solid #bbb;
    vertical-align: bottom;
}
#grid tbody tr:nth-child(3) th {
    line-height: 10px;
}
#grid tbody .selected {
    background: #d2d2d2;
    color: #217346;
    border-right: 2px solid #217346;
}
#grid td {
    padding: 0 3px 0 2px;
    white-space: nowrap;
    vertical-align: bottom;
}
#grid .line-r { border-right: 1px solid #000; }
#grid .line-b { border-bottom: 1px solid #000; line-height: 12px; }
#grid .wrap { white-space: pre; }
#grid .right { text-align: right; }
#grid .center { text-align: center; }
#grid .bold { font-weight: 600; }
#grid .red { color: #f00; }
#grid .slate { color: #263238; }
#grid .heading {
    text-align: center;
    vertical-align: middle;
    font-weight: bold;
    font-size: 11px;
}
#grid .shade {
    background: #f2f2f2;
    text-align: right;
    font-size: 9px;
    color: #7f7f7f;
}
#grid .score {
    text-align: center;
    vertical-align: middle;
    font-weight: bold;
    font-size: 14px;
}

/* scroll bars */
.arrow {
    border: 4px solid transparent;
}
.arrow.up { border-bottom-color: #777; border-top: none; }
.arrow.down { border-top-color: #777; border-bottom: none; }
.arrow.left { border-right-color: #777; border-left: none; }
.arrow.right { border-left-color: #777; border-right: none; }
.vscroll {
    width: 21px;
    flex: none;
    display: flex;
    flex-direction: column;
    padding: 2px 3px 0;
    background: linear-gradient(#dadada, #dadada) center / 15px 100% no-repeat;
}
.vscroll button,
.hscroll button,
.thumb {
    flex: none;
    width: 15px;
    height: 15px;
    border: 1px solid #ababab;
    background: #fff;
}
.vscroll .thumb {
    height: 258px;
}
.vscroll button:last-child {
    margin-top: auto;
}
.hscroll {
    display: flex;
    width: 495px;
    margin-right: 19px;
    background: #dadada;
}
.hscroll .thumb {
    width: 385px;
}
.hscroll button:last-child {
    margin-left: auto;
}

/* sheet tabs */
.sheet-tabs {
    height: 28px;
    flex: none;
    display: flex;
    align-items: center;
    border-top: 1px solid #ababab;
    font-size: 13px;
}
.sheet-tabs a {
    height: 20px;
    line-height: 17px;
    border-right: 1px solid #ababab;
    text-align: center;
}
.sheet-tabs .active {
    align-self: flex-start;
    height: 25px;
    line-height: 25px;
    margin-top: -1px;
    border: none;
    border-bottom: 2px solid #217346;
    background: #fff;
    font-size: 12px;
    font-weight: bold;
    color: #217346;
}
.w65 { width: 65px; }
.w69 { width: 69px; }
.w72 { width: 72px; }
.w81 { width: 81px; }
.w91 { width: 91px; }
.w97 { width: 97px; }
.w99 { width: 99px; }
.tab-nav {
    width: 101px;
    height: 20px;
    display: flex;
    align-items: center;
    gap: 25px;
    padding-left: 26px;
    border-right: 1px solid #ababab;
}
.tab-nav .left { border-right-color: #c0c0c0; }
.tab-nav .right { border-left-color: #c0c0c0; }
.add-sheet {
    margin-left: 33px;
}
.sheet-tabs .dots {
    margin: 0 15px 0 auto;
}

/* status bar */
.statusbar {
    height: 22px;
    flex: none;
    display: flex;
    align-items: center;
    padding-left: 7px;
    border-top: 1px solid #c6c6c6;
    background: #f1f1f1;
    font-size: 11px;
}
.macro {
    margin-left: 20px;
}
.views {
    display: flex;
    margin-left: auto;
}
.views button {
    width: 38px;
    height: 21px;
}
.views .on {
    background: #c8c8c8;
}
.zoom {
    display: flex;
    align-items: center;
    gap: 4px;
    padding: 0 13px 0 5px;
}
.zoom span {
    margin-left: 10px;
}
.zoom input {
    appearance: none;
    width: 100px;
    height: 11px;
    margin: 0;
    background: linear-gradient(#999, #999) center / 1px 5px no-repeat,
                linear-gradient(#aaa, #aaa) center / 100% 1px no-repeat;
}
.zoom input::-webkit-slider-thumb {
    appearance: none;
    width: 4px;
    height: 11px;
    background: #666;
}

/* task bar */
.taskbar {
    position: relative;
    height: 40px;
    flex: none;
    display: flex;
    background: #0a1217;
    color: #fff;
}
.taskbar::before {
    content: "";
    position: absolute;
    top: 0;
    left: 20px;
    right: 24px;
    height: 5px;
    background: #2a0f00;
    border-bottom: 1px solid #23282b;
}
.taskbar button {
    position: relative;
    width: 49px;
    height: 40px;
    flex: none;
}
.taskbar button::after {
    content: "";
    position: absolute;
    left: 4px;
    right: 4px;
    bottom: 0;
    height: 2px;
}
.taskbar .open::after {
    background: #fbd3a4;
}
.taskbar .current {
    background: #3a4043;
}
.taskbar .current::after {
    left: 0;
    right: 0;
}
.tray {
    display: flex;
    align-items: center;
    gap: 9px;
    margin-left: auto;
    padding-right: 15px;
}
.clock {
    display: flex;
    flex-direction: column;
    align-items: center;
    margin-left: -2px;
    line-height: 18px;
}
.notices {
    position: relative;
    width: 24px;
    margin-left: 6px;
}
.badge {
    position: absolute;
    left: 8px;
    top: 6px;
    width: 16px;
    height: 16px;
    border: 1px solid #888;
    border-radius: 50%;
    background: #2b3033;
    line-height: 14px;
    text-align: center;
}
```
